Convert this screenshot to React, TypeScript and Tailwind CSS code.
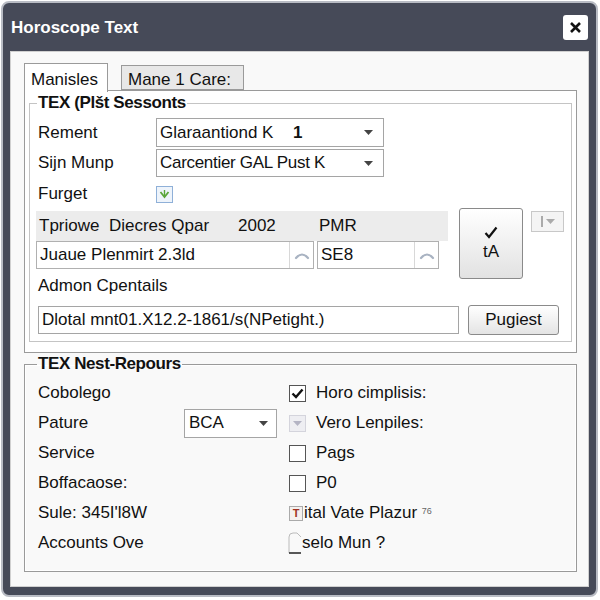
import React from "react";

const font = { fontFamily: '"Liberation Sans", Arial, sans-serif' };

const Caret = () => (
  <svg width="9" height="5" viewBox="0 0 9 5" className="shrink-0">
    <path d="M0 0 L9 0 L4.5 5 Z" fill="#444" />
  </svg>
);

const UpArrow = () => (
  <svg width="16" height="10" viewBox="0 0 16 10">
    <path d="M2 8 Q8 1 14 8" fill="none" stroke="#a9b3c2" strokeWidth="2.2" strokeLinecap="round" />
  </svg>
);

const Box = ({ checked }: { checked?: boolean }) => (
  <div className="w-[17px] h-[17px] border border-[#555] bg-white flex items-center justify-center shrink-0">
    {checked && (
      <svg width="13" height="11" viewBox="0 0 13 11">
        <path d="M1.5 5.5 L5 9 L11.5 1.5" fill="none" stroke="#111" strokeWidth="2.4" />
      </svg>
    )}
  </div>
);

const App = () => {
  return (
    <div className="w-[600px] h-[600px] bg-white text-[17px] text-[#111]" style={font}>
      <div className="ml-[1px] mr-[2px] h-[596px] mt-[1px] rounded-[8px] bg-[#464a58] border-2 border-[#b9bcc4] flex flex-col">
        {/* title bar */}
        <div className="h-[48px] flex items-center justify-between pl-[8px] pr-[8px] shrink-0">
          <span className="text-white font-bold text-[17px] mt-[1px]">Horoscope Text</span>
          <div className="w-[25px] h-[25px] bg-white rounded-[3px] flex items-center justify-center">
            <svg width="13" height="13" viewBox="0 0 13 13">
              <path d="M2 2 L11 11 M11 2 L2 11" stroke="#111" strokeWidth="2.6" />
            </svg>
          </div>
        </div>

        {/* client area */}
        <div className="mx-[7px] mb-[8px] flex-1 bg-[#f9f9f9] border border-[#d0d0d0] pl-[13px] pr-[11px] pt-[11px] flex flex-col">
          {/* tabs */}
          <div className="flex items-end h-[29px] relative z-10">
            <div className="h-[29px] w-[84px] bg-white border border-b-0 border-[#9a9a9a] pl-[6px] pt-[3px]">Manisles</div>
            <div className="h-[25px] w-[123px] ml-[13px] mb-[2px] bg-[#e8e8e8] border border-[#9a9a9a] pl-[6px] pt-[1px]">Mane 1 Care:</div>
          </div>

          {/* tab panel */}
          <div className="-mt-[2px] h-[263px] border border-[#9a9a9a] bg-white px-[4px] pt-[3px]">
            <fieldset className="border border-[#c4c4c4] h-[248px] pl-[6px] pr-[6px]">
              <legend className="font-bold ml-[1px] px-[1px] text-[17px] leading-[18px] tracking-[-0.4px]">TEX (Plšt Sessonts</legend>

              <div className="mt-[6px] flex items-center h-[29px]">
                <span className="w-[120px] pl-[2px]">Rement</span>
                <div className="w-[228px] h-[29px] border border-[#a5a5a5] bg-white flex items-center pl-[3px] pr-[10px]">
                  <span className="w-[133px]">Glaraantiond K</span>
                  <span className="font-bold flex-1">1</span>
                  <Caret />
                </div>
              </div>
              <div className="mt-[2px] flex items-center h-[28px]">
                <span className="w-[120px] pl-[2px]">Sijn Munp</span>
                <div className="w-[228px] h-[28px] border border-[#a5a5a5] bg-white flex items-center pl-[3px] pr-[10px]">
                  <span className="flex-1 tracking-[-0.3px]">Carcentier GAL Pust K</span>
                  <Caret />
                </div>
              </div>
              <div className="mt-[3px] flex items-center h-[28px]">
                <span className="w-[120px] pl-[2px]">Furget</span>
                <div className="w-[17px] h-[17px] border border-[#8fb0d8] bg-[#eef4fb] flex items-center justify-center">
                  <svg width="11" height="9" viewBox="0 0 11 9">
                    <path d="M1.5 2 L5.5 7 L9.5 2" fill="none" stroke="#5aa63a" strokeWidth="1.8" />
                    <path d="M5.5 0 L5.5 6" stroke="#5aa63a" strokeWidth="1.4" />
                  </svg>
                </div>
              </div>

              <div className="flex">
                <div className="flex flex-col">
                  <div className="mt-[3px] w-[412px] h-[30px] bg-[#ececec] flex items-center pl-[3px]">
                    <span className="w-[199px]">Tpriowe&nbsp; Diecres Qpar</span>
                    <span className="w-[81px]">2002</span>
                    <span>PMR</span>
                  </div>
                  <div className="flex">
                    <div className="w-[278px] h-[28px] border border-[#b0b0b0] bg-white flex items-center pl-[3px]">
                      <span className="flex-1">Juaue Plenmirt 2.3ld</span>
                      <div className="w-[24px] h-full border-l border-[#d8d8d8] flex items-center justify-center"><UpArrow /></div>
                    </div>
                    <div className="ml-[3px] w-[122px] h-[28px] border border-[#b0b0b0] bg-white flex items-center pl-[3px]">
                      <span className="flex-1">SE8</span>
                      <div className="w-[24px] h-full border-l border-[#d8d8d8] flex items-center justify-center"><UpArrow /></div>
                    </div>
                  </div>
                </div>
                <div className="ml-[11px] w-[64px] h-[71px] rounded-[3px] border border-[#8a8a8a] bg-gradient-to-b from-white to-[#e2e2e2] flex flex-col items-center justify-center">
                  <svg width="14" height="13" viewBox="0 0 14 13" className="mb-[3px]">
                    <path d="M1.5 7 L5 11 L12.5 1.5" fill="none" stroke="#111" strokeWidth="2.2" />
                  </svg>
                  <span className="leading-[20px]">tA</span>
                </div>
                <div className="ml-[8px] mt-[3px] w-[33px] h-[21px] border border-[#c8c8c8] bg-[#f4f4f4] flex items-center justify-center gap-[3px] text-[#999]">
                  <span className="w-[2px] h-[11px] bg-[#aaa]" />
                  <svg width="9" height="5" viewBox="0 0 9 5"><path d="M0 0 L9 0 L4.5 5 Z" fill="#aaa" /></svg>
                </div>
              </div>

              <div className="-mt-[5px] h-[24px] flex items-center pl-[2px]">Admon Cpentails</div>

              <div className="mt-[7px] flex items-center">
                <div className="ml-[2px] w-[421px] h-[28px] border border-[#a5a5a5] bg-white flex items-center pl-[3px] whitespace-nowrap overflow-hidden">
                  Dlotal mnt01.X12.2-1861/s(NPetight.)
                </div>
                <div className="ml-[9px] w-[91px] h-[30px] rounded-[3px] border border-[#8a8a8a] bg-gradient-to-b from-white to-[#e4e4e4] flex items-center justify-center">
                  Pugiest
                </div>
              </div>
            </fieldset>
          </div>

          {/* second group */}
          <fieldset className="mt-[2px] border border-[#9a9a9a] h-[217px] pl-[13px] shadow-[inset_0_0_0_1px_#ffffff]">
            <legend className="font-bold ml-[-1px] px-[1px] text-[17px] leading-[18px] tracking-[-0.4px]">TEX Nest-Repours</legend>
            <div className="mt-[5px] flex flex-col">
              <div className="h-[30px] flex items-center">
                <span className="w-[251px]">Cobolego</span>
                <Box checked />
                <span className="ml-[10px]">Horo cimplisis:</span>
              </div>
              <div className="h-[30px] flex items-center">
                <span className="w-[146px]">Pature</span>
                <div className="w-[93px] h-[29px] border border-[#a5a5a5] bg-white flex items-center pl-[4px] pr-[8px]">
                  <span className="flex-1">BCA</span>
                  <Caret />
                </div>
                <div className="ml-[12px] w-[17px] h-[17px] border border-[#d4d4dc] bg-[#eeeef2] flex items-center justify-center">
                  <svg width="9" height="5" viewBox="0 0 9 5"><path d="M0 0 L9 0 L4.5 5 Z" fill="#b4b4c4" /></svg>
                </div>
                <span className="ml-[10px]">Vero Lenpiles:</span>
              </div>
              <div className="h-[30px] flex items-center">
                <span className="w-[251px]">Service</span>
                <Box />
                <span className="ml-[10px]">Pags</span>
              </div>
              <div className="h-[30px] flex items-center">
                <span className="w-[251px]">Boffacaose:</span>
                <Box />
                <span className="ml-[10px]">P0</span>
              </div>
              <div className="h-[30px] flex items-center">
                <span className="w-[251px]">Sule: 345I'l8W</span>
                <div className="w-[14px] h-[15px] border border-[#aaa] bg-[#f4f0ee] flex items-center justify-center text-[11px] font-bold text-[#a03020] leading-none">T</div>
                <span className="ml-[1px]">ital Vate Plazur <sup className="text-[9px] text-[#666]">76</sup></span>
              </div>
              <div className="h-[30px] flex items-center">
                <span className="w-[250px]">Accounts Ove</span>
                <svg width="14" height="22" viewBox="0 0 14 22" className="shrink-0">
                  <path d="M1 21 L1 5 Q1 1 5 1 L9 1 L13 5" fill="none" stroke="#bbb" strokeWidth="1" />
                  <path d="M1 21 L13 21" stroke="#222" strokeWidth="1.5" />
                </svg>
                <span>selo Mun ?</span>
              </div>
            </div>
          </fieldset>
        </div>
      </div>
    </div>
  );
};

export default App;
